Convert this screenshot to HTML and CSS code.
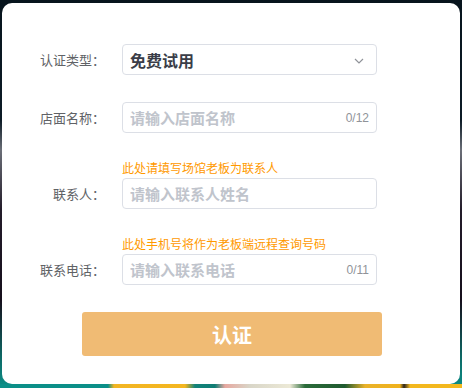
FILE: index.html
```html
<!DOCTYPE html>
<html lang="zh-CN">

<head>
    <meta charset="UTF-8">
    <title>认证</title>
    <link rel="stylesheet" href="styles.css">
</head>

<body>
    <section class="auth-card">
        <div class="form-item">
            <label class="form-label">认证类型：</label>
            <div class="form-content">
                <div class="select-box">
                    <span class="select-value">免费试用</span>
                    <svg class="select-arrow" width="10" height="6" viewBox="0 0 10 6">
                        <polyline points="1,1 5,5 9,1" fill="none" stroke="#909399" stroke-width="1.2" />
                    </svg>
                </div>
            </div>
        </div>

        <div class="form-item">
            <label class="form-label">店面名称：</label>
            <div class="form-content">
                <div class="input-box">
                    <input type="text" placeholder="请输入店面名称">
                    <span class="input-count">0/12</span>
                </div>
            </div>
        </div>

        <div class="form-item">
            <label class="form-label">联系人：</label>
            <div class="form-content">
                <div class="form-tip">此处请填写场馆老板为联系人</div>
                <div class="input-box">
                    <input type="text" placeholder="请输入联系人姓名">
                </div>
            </div>
        </div>

        <div class="form-item">
            <label class="form-label">联系电话：</label>
            <div class="form-content">
                <div class="form-tip">此处手机号将作为老板端远程查询号码</div>
                <div class="input-box">
                    <input type="text" placeholder="请输入联系电话">
                    <span class="input-count">0/11</span>
                </div>
            </div>
        </div>

        <button class="submit-btn">认证</button>
    </section>
</body>

</html>
```

FILE: styles.css
```css
html,
body {
    height: 100%;
}

body {
    margin: 0;
    padding: 3px 2px 0;
    box-sizing: border-box;
    font-family: "Noto Sans CJK SC", "Liberation Sans", sans-serif;
    background:
        linear-gradient(to right, #0b8f88 0, #0b8f88 108px, #f2b523 114px, #f4b61f 185px, #12837a 195px, #0f7d74 215px, #e7a8a0 225px, #d9d6c8 250px, #ece9d6 290px, #2b6b3a 305px, #1f5a30 345px, #e9b22a 365px, #f0b21c 400px, #2a241c 404px, #f3b81e 410px, #f3b81e 100%) bottom / 100% 4px no-repeat,
        linear-gradient(to bottom, #07141d 0, #0c1b26 120px, #6b6f78 150px, #231c2a 210px, #160f1c 300px, #0d6d69 360px, #0b8f88 100%);
}

.auth-card {
    background: #fff;
    border-radius: 10px;
    padding: 41px 0 29px;
    height: 381px;
    box-sizing: border-box;
}

.form-item {
    display: flex;
    align-items: flex-end;
    margin-bottom: 27px;
}

.form-label {
    width: 120px;
    flex-shrink: 0;
    box-sizing: border-box;
    padding-right: 17px;
    text-align: right;
    font-size: 13px;
    line-height: 31px;
    color: #606266;
}

.form-content {
    width: 255px;
}

.form-tip {
    font-size: 12px;
    line-height: 16px;
    color: #ff9900;
    margin-bottom: 2px;
    white-space: nowrap;
}

.select-box,
.input-box {
    display: flex;
    align-items: center;
    height: 31px;
    box-sizing: border-box;
    border: 1px solid #dcdfe6;
    border-radius: 4px;
    padding: 0 7px;
    background: #fff;
}

.select-value {
    flex: 1;
    font-size: 16px;
    font-weight: bold;
    color: #3a3d48;
}

.select-arrow {
    margin-right: 5px;
    margin-top: 2px;
}

.input-box input {
    flex: 1;
    min-width: 0;
    border: none;
    outline: none;
    padding: 0;
    font-family: inherit;
    font-size: 15px;
    font-weight: bold;
    color: #303133;
    background: transparent;
}

.input-box input::placeholder {
    color: #c0c4cc;
}

.input-count {
    font-family: "Liberation Sans", Arial, sans-serif;
    font-size: 12px;
    color: #909399;
}

.submit-btn {
    display: block;
    width: 300px;
    height: 44px;
    margin: 26px 0 0 80px;
    border: none;
    border-radius: 3px;
    background: #f0bb74;
    color: #fff;
    font-family: inherit;
    font-size: 20px;
    font-weight: bold;
}
```
